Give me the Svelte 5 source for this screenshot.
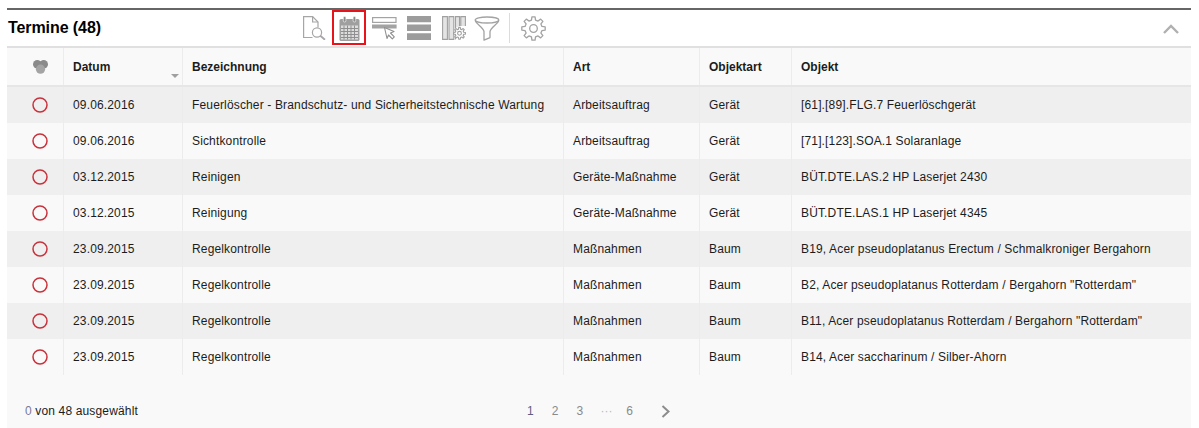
<script>
  const rows = [
    ['09.06.2016', 'Feuerlöscher - Brandschutz- und Sicherheitstechnische Wartung', 'Arbeitsauftrag', 'Gerät', '[61].[89].FLG.7 Feuerlöschgerät'],
    ['09.06.2016', 'Sichtkontrolle', 'Arbeitsauftrag', 'Gerät', '[71].[123].SOA.1 Solaranlage'],
    ['03.12.2015', 'Reinigen', 'Geräte-Maßnahme', 'Gerät', 'BÜT.DTE.LAS.2 HP Laserjet 2430'],
    ['03.12.2015', 'Reinigung', 'Geräte-Maßnahme', 'Gerät', 'BÜT.DTE.LAS.1 HP Laserjet 4345'],
    ['23.09.2015', 'Regelkontrolle', 'Maßnahmen', 'Baum', 'B19, Acer pseudoplatanus Erectum / Schmalkroniger Bergahorn'],
    ['23.09.2015', 'Regelkontrolle', 'Maßnahmen', 'Baum', 'B2, Acer pseudoplatanus Rotterdam / Bergahorn "Rotterdam"'],
    ['23.09.2015', 'Regelkontrolle', 'Maßnahmen', 'Baum', 'B11, Acer pseudoplatanus Rotterdam / Bergahorn "Rotterdam"'],
    ['23.09.2015', 'Regelkontrolle', 'Maßnahmen', 'Baum', 'B14, Acer saccharinum / Silber-Ahorn']
  ];
  const headers = ['Datum', 'Bezeichnung', 'Art', 'Objektart', 'Objekt'];

  // cog outline: eight rounded teeth around the centre
  function gearPath(cx, cy, outer, inner, teeth) {
    const step = (Math.PI * 2) / teeth;
    let d = '';
    for (let i = 0; i < teeth; i++) {
      const a = i * step - Math.PI / 2;
      const pts = [
        [inner, a - step * 0.3],
        [outer, a - step * 0.17],
        [outer, a + step * 0.17],
        [inner, a + step * 0.3]
      ];
      for (const [r, t] of pts) {
        const x = (cx + r * Math.cos(t)).toFixed(2);
        const y = (cy + r * Math.sin(t)).toFixed(2);
        d += (d ? 'L' : 'M') + x + ' ' + y;
      }
    }
    return d + 'Z';
  }
</script>

<div class="panel">
  <header class="titlebar">
    <h2>Termine (48)</h2>
    <div class="tools">
      <button class="tool">
        <svg width="23" height="24" viewBox="0 0 23 24" fill="none" stroke="#a6a6a6" stroke-width="1.2">
          <path d="M9.500 21.500H.6V.6h9l5.400 5.400v5.500"/>
          <path d="M9.600.6v5.400H15"/>
          <circle cx="14" cy="16.500" r="4.600"/>
          <path d="M17.300 19.800l4.700 4" stroke-width="1.800"/>
        </svg>
      </button>
      <button class="tool active">
        <svg width="21" height="25" viewBox="0 0 21 25" fill="none">
          <rect x=".5" y="3" width="20" height="22" rx="1.500" fill="#9f9f9f"/>
          <path d="M2 9.500h17v14H2z" fill="#dcdcdc"/>
          <path d="M2 12.500h17M2 15.500h17M2 18.500h17M2 21.500h17M5 9.500v14M8.500 9.500v14M12 9.500v14M15.500 9.500v14" stroke="#8f8f8f" stroke-width="1"/>
          <rect x="4.300" y=".5" width="2.600" height="5.500" rx="1.200" fill="#8a8a8a" stroke="#fff" stroke-width=".6"/>
          <rect x="14.100" y=".5" width="2.600" height="5.500" rx="1.200" fill="#8a8a8a" stroke="#fff" stroke-width=".6"/>
        </svg>
      </button>
      <button class="tool">
        <svg width="25" height="23" viewBox="0 0 25 23" fill="none">
          <rect x=".6" y=".6" width="23.400" height="4.800" stroke="#a3a3a3" stroke-width="1.200"/>
          <rect y="7.500" width="24.600" height="4" fill="#a3a3a3"/>
          <path d="M12.500 10.500l9.500 4-3.500 1.500 3.800 3.800-2 2-3.800-3.800-1.500 3.500z" fill="#fff" stroke="#8f8f8f" stroke-width="1.100" stroke-linejoin="round"/>
        </svg>
      </button>
      <button class="tool">
        <svg width="24" height="24" viewBox="0 0 24 24">
          <path d="M0 0h24v6.300H0zM0 8.600h24v6.300H0zM0 17.300h24V24H0z" fill="#9c9c9c"/>
        </svg>
      </button>
      <button class="tool">
        <svg width="24" height="24" viewBox="0 0 24 24" fill="none" stroke="#a0a0a0" stroke-width="1.100">
          <path d="M.6.600h4.800v22.800H.6zM7 .6h4.800v22.800H7z" fill="#e4e4e4"/>
          <path d="M13.500 12V.6h4v9.400M18.800 10V.6h4.600V10" fill="#e4e4e4"/>
          <path d="M13.500 23.400V20"/>
          <g transform="translate(17.500 17.300)">
            <path d={gearPath(0, 0, 6, 4.300, 8)} stroke-width="1.100" stroke-linejoin="round" fill="#fff"/>
            <circle r="1.900"/>
          </g>
        </svg>
      </button>
      <button class="tool funnel">
        <svg width="26" height="25" viewBox="0 0 26 25" fill="none" stroke="#a3a3a3" stroke-width="1.300" stroke-linejoin="round">
          <ellipse cx="13" cy="4" rx="11.800" ry="3"/>
          <path d="M1.200 4.300c1 4 7.800 6.600 8.800 11.200v8.700l6-2.600v-6.100c1-4.600 7.800-7.200 8.800-11.200"/>
        </svg>
      </button>
      <span class="divider"></span>
      <button class="tool gear">
        <svg width="25" height="25" viewBox="0 0 25 25" fill="none" stroke="#a3a3a3" stroke-width="1.300" stroke-linejoin="round">
          <circle cx="12.500" cy="12.500" r="3.800"/>
          <path d={gearPath(12.500, 12.500, 11.800, 8.700, 8)}/>
        </svg>
      </button>
    </div>
    <svg class="collapse" width="16" height="10" viewBox="0 0 16 10" fill="none" stroke="#b0b0b0" stroke-width="2.400">
      <path d="M1 9l7-7 7 7"/>
    </svg>
  </header>

  <div class="grid head">
    <div class="cell icon-cell">
      <svg width="15" height="14" viewBox="0 0 15 14">
        <circle cx="4.300" cy="4.300" r="4.300" fill="#8a8a8a"/>
        <circle cx="10.700" cy="4.300" r="4.300" fill="#8a8a8a"/>
        <circle cx="7.500" cy="9.200" r="4.600" fill="#a4a4a4"/>
      </svg>
    </div>
    {#each headers as label, i}
      <div class="cell">
        {label}
        {#if i === 0}<span class="sort"></span>{/if}
      </div>
    {/each}
  </div>

  {#each rows as row, i}
    <div class="grid row" class:odd={i % 2 === 0}>
      <div class="cell icon-cell">
        <svg width="16" height="16" viewBox="0 0 16 16" fill="none">
          <circle cx="8" cy="8" r="7" stroke="#c9323c" stroke-width="1.500"/>
        </svg>
      </div>
      {#each row as value}
        <div class="cell">{value}</div>
      {/each}
    </div>
  {/each}

  <footer class="footer">
    <div class="count"><span class="zero">0</span> von 48 ausgewählt</div>
    <nav class="pager">
      <span class="page current">1</span>
      <span class="page">2</span>
      <span class="page">3</span>
      <span class="page dots">···</span>
      <span class="page">6</span>
      <svg class="next" width="10" height="13" viewBox="0 0 10 13" fill="none" stroke="#8c8c8c" stroke-width="2">
        <path d="M1.500 1l6 5.500-6 5.500"/>
      </svg>
    </nav>
  </footer>
</div>

<style>
  :global(body) {
    background: #fff;
  }

  .panel {
    width: 1184px;
    height: 420px;
    margin: 8px 0 0 7px;
    font-family: "Liberation Sans", Arial, sans-serif;
    font-size: 12px;
    letter-spacing: 0.15px;
    color: #1c1c1c;
    background: #f9f9f9;
    overflow: hidden;
  }

  .titlebar {
    height: 36px;
    display: flex;
    align-items: center;
    position: relative;
    background: #fff;
    border-top: 2px solid #666;
    border-bottom: 2px solid #e0e0e0;
  }

  h2 {
    width: 289px;
    margin: 0 0 0 1px;
    font-size: 16px;
    font-weight: 700;
    letter-spacing: -0.08px;
    color: #000;
  }

  .tools {
    display: flex;
    align-items: flex-start;
    height: 36px;
  }

  .tool {
    width: 34px;
    height: 35px;
    padding: 1px 0 0;
    margin-right: 1px;
    display: flex;
    align-items: center;
    justify-content: center;
    border: 2px solid transparent;
    background: none;
  }

  .tool.active {
    border-color: #e8141c;
  }

  .tool.funnel {
    margin-left: -2px;
  }

  .divider {
    width: 1px;
    height: 30px;
    margin: 3px 6px 0 4px;
    background: #dcdcdc;
  }

  .collapse {
    position: absolute;
    right: 12px;
    top: 14px;
  }

  .grid {
    display: grid;
    grid-template-columns: 56px 119px 381px 136px 92px 1fr;
  }

  .head {
    height: 37px;
    font-weight: 700;
    letter-spacing: 0;
    border-bottom: 2px solid #e6e6e6;
  }

  .head .cell {
    position: relative;
  }

  .row {
    height: 36px;
  }

  .row.odd {
    background: #efefef;
  }

  .cell {
    display: flex;
    align-items: center;
    padding-left: 9px;
    border-left: 1px solid #ececec;
    white-space: nowrap;
  }

  .icon-cell {
    padding: 0 0 0 10px;
    justify-content: center;
    border-left: none;
    box-sizing: border-box;
  }

  .sort {
    position: absolute;
    right: 3px;
    bottom: 7px;
    border: 4px solid transparent;
    border-top: 4px solid #a0a0a0;
    border-bottom: none;
  }

  .footer {
    height: 53px;
    display: flex;
    align-items: center;
    position: relative;
    padding: 19px 0 0 18px;
    box-sizing: border-box;
  }

  .zero {
    color: #7a7a9a;
  }

  .pager {
    position: absolute;
    left: 517px;
    top: 29px;
    display: flex;
    align-items: center;
    color: #8a8a8a;
    letter-spacing: 0;
  }

  .page {
    width: 24.800px;
    text-align: left;
    padding-left: 3px;
    box-sizing: border-box;
  }

  .page.current {
    color: #5e5e7e;
  }

  .page.dots {
    color: #bbb;
    padding-left: 2px;
  }

  .next {
    margin-left: 13px;
  }
</style>
